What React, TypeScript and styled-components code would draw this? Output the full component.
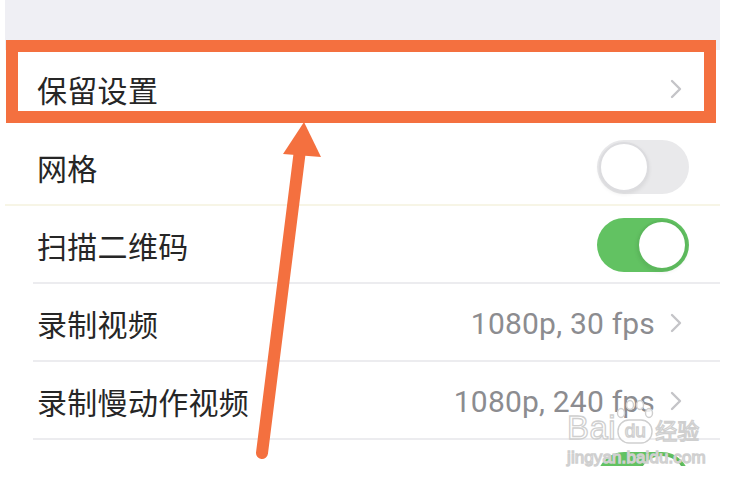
import React from "react";
import styled, { createGlobalStyle } from "styled-components";

const GlobalStyle = createGlobalStyle`
  html, body {
    margin: 0;
    padding: 0;
    background: #ffffff;
  }
  body {
    font-family: "Noto Sans CJK SC", "Noto Sans", sans-serif;
  }
`;

const Page = styled.div`
  position: relative;
  width: 741px;
  height: 481px;
  overflow: hidden;
  background: #ffffff;
`;

const Screen = styled.div`
  margin-left: 5px;
  width: 715px;
  height: 466px;
  overflow: hidden;
  display: flex;
  flex-direction: column;
`;

const Header = styled.div`
  height: 50px;
  flex-shrink: 0;
  background: #efeff4;
`;

const List = styled.div`
  background: #ffffff;
  display: flex;
  flex-direction: column;
`;

const Row = styled.div<{ $divider?: "line" | "cream" | "none" }>`
  position: relative;
  flex-shrink: 0;
  height: 78px;
  box-sizing: border-box;
  display: flex;
  align-items: center;
  justify-content: space-between;
  padding: 0 31px 0 32px;

  &::after {
    content: "";
    position: absolute;
    bottom: 0;
    right: 0;
    left: ${(p) => (p.$divider === "cream" ? "0" : "28px")};
    height: 2px;
    background: ${(p) =>
      p.$divider === "cream"
        ? "#f7f5e6"
        : p.$divider === "none"
        ? "transparent"
        : "#ececef"};
  }
`;

const Label = styled.span`
  font-size: 30px;
  line-height: 1;
  color: #262626;
  letter-spacing: 0.3px;
`;

const Trailing = styled.div`
  display: flex;
  align-items: center;
  gap: 14px;
`;

const Value = styled.span`
  font-family: Roboto, "Liberation Sans", sans-serif;
  font-size: 30px;
  color: #8c8c90;
  letter-spacing: 0.2px;
`;

const ChevronBox = styled.span`
  display: flex;
  width: 14px;
  margin-right: 6px;
`;

const Track = styled.div<{ $on: boolean }>`
  position: relative;
  width: 92px;
  height: 54px;
  border-radius: 27px;
  background: ${(p) => (p.$on ? "#62c262" : "#e9e9eb")};
  display: flex;
  align-items: center;
  justify-content: ${(p) => (p.$on ? "flex-end" : "flex-start")};
  padding: 0 2px;
  box-sizing: border-box;
`;

const Knob = styled.div<{ $on: boolean }>`
  width: 50px;
  height: 50px;
  border-radius: 50%;
  background: #ffffff;
  box-sizing: border-box;
  border: 2px solid ${(p) => (p.$on ? "#5cb85c" : "#dcdcdf")};
  box-shadow: 0 2px 4px rgba(0, 0, 0, 0.08);
`;

const Highlight = styled.div`
  position: absolute;
  left: 6px;
  top: 40px;
  width: 710px;
  height: 83px;
  box-sizing: border-box;
  border: 12px solid #f4703f;
  pointer-events: none;
`;

const ArrowLayer = styled.svg`
  position: absolute;
  left: 0;
  top: 0;
  pointer-events: none;
`;

const Watermark = styled.div`
  position: absolute;
  left: 567px;
  top: 398px;
  display: flex;
  flex-direction: column;
  align-items: flex-start;
  color: rgba(255, 255, 255, 0.85);
  -webkit-text-stroke: 1.3px #cfcfcf;
  pointer-events: none;
`;

const BrandLine = styled.div`
  display: flex;
  align-items: flex-end;
  height: 46px;
`;

const BrandLatin = styled.span`
  font-family: "Liberation Sans", sans-serif;
  font-size: 33px;
  line-height: 33px;
  letter-spacing: 0.5px;
`;

const Paw = styled.span`
  position: relative;
  display: inline-flex;
  align-items: flex-end;
  justify-content: center;
  width: 38px;
  height: 46px;
`;

const PawText = styled.span`
  position: relative;
  font-family: "Liberation Sans", sans-serif;
  font-size: 19px;
  line-height: 20px;
  margin-bottom: 3px;
`;

const BrandCn = styled.span`
  font-family: "Noto Sans CJK SC", sans-serif;
  font-size: 22px;
  line-height: 26px;
  margin-left: 1px;
  margin-bottom: 2px;
`;

const SiteLine = styled.div`
  font-family: "Liberation Sans", sans-serif;
  font-size: 17px;
  line-height: 20px;
  letter-spacing: 0.1px;
  margin-top: 4px;
`;

const Chevron = () => (
  <ChevronBox>
    <svg width="14" height="22" viewBox="0 0 14 22">
      <path
        d="M3 3 L11 11 L3 19"
        fill="none"
        stroke="#c4c4c8"
        strokeWidth="2.4"
        strokeLinecap="round"
        strokeLinejoin="round"
      />
    </svg>
  </ChevronBox>
);

const Toggle = ({ on }: { on: boolean }) => (
  <Track $on={on}>
    <Knob $on={on} />
  </Track>
);

interface SettingRowProps {
  label: string;
  value?: string;
  toggle?: boolean;
  chevron?: boolean;
  divider?: "line" | "cream" | "none";
}

const SettingRow = ({ label, value, toggle, chevron, divider }: SettingRowProps) => (
  <Row $divider={divider}>
    <Label>{label}</Label>
    <Trailing>
      {value && <Value>{value}</Value>}
      {chevron && <Chevron />}
      {toggle !== undefined && <Toggle on={toggle} />}
    </Trailing>
  </Row>
);

const rows: SettingRowProps[] = [
  { label: "保留设置", chevron: true, divider: "none" },
  { label: "网格", toggle: false, divider: "cream" },
  { label: "扫描二维码", toggle: true },
  { label: "录制视频", value: "1080p, 30 fps", chevron: true },
  { label: "录制慢动作视频", value: "1080p, 240 fps", chevron: true },
  { label: "录制立体声", toggle: true, divider: "none" },
];

export default function App() {
  return (
    <>
      <GlobalStyle />
      <Page>
        <Screen>
          <Header />
          <List>
            {rows.map((r) => (
              <SettingRow key={r.label} {...r} />
            ))}
          </List>
        </Screen>

        {/* annotation: box round the first row */}
        <Highlight />

        {/* annotation: arrow pointing at the box */}
        <ArrowLayer width="741" height="481" viewBox="0 0 741 481">
          <line
            x1="300"
            y1="150"
            x2="262"
            y2="453"
            stroke="#f4703f"
            strokeWidth="12"
            strokeLinecap="round"
          />
          <polygon points="304,122 283,154 321,157" fill="#f4703f" />
        </ArrowLayer>

        <Watermark>
          <BrandLine>
            <BrandLatin>Bai</BrandLatin>
            <Paw>
              <svg
                width="38"
                height="46"
                viewBox="0 0 38 46"
                style={{ position: "absolute", left: 0, top: 0 }}
              >
                <g fill="rgba(255,255,255,0.85)" stroke="#cfcfcf" strokeWidth="1.4">
                  <rect x="2" y="22" width="34" height="23" rx="11" />
                  <ellipse cx="5" cy="15" rx="3.5" ry="4.5" />
                  <ellipse cx="14" cy="7" rx="3.5" ry="4.5" />
                  <ellipse cx="24" cy="7" rx="3.5" ry="4.5" />
                  <ellipse cx="33" cy="15" rx="3.5" ry="4.5" />
                </g>
              </svg>
              <PawText>du</PawText>
            </Paw>
            <BrandCn>经验</BrandCn>
          </BrandLine>
          <SiteLine>jingyan.baidu.com</SiteLine>
        </Watermark>
      </Page>
    </>
  );
}
